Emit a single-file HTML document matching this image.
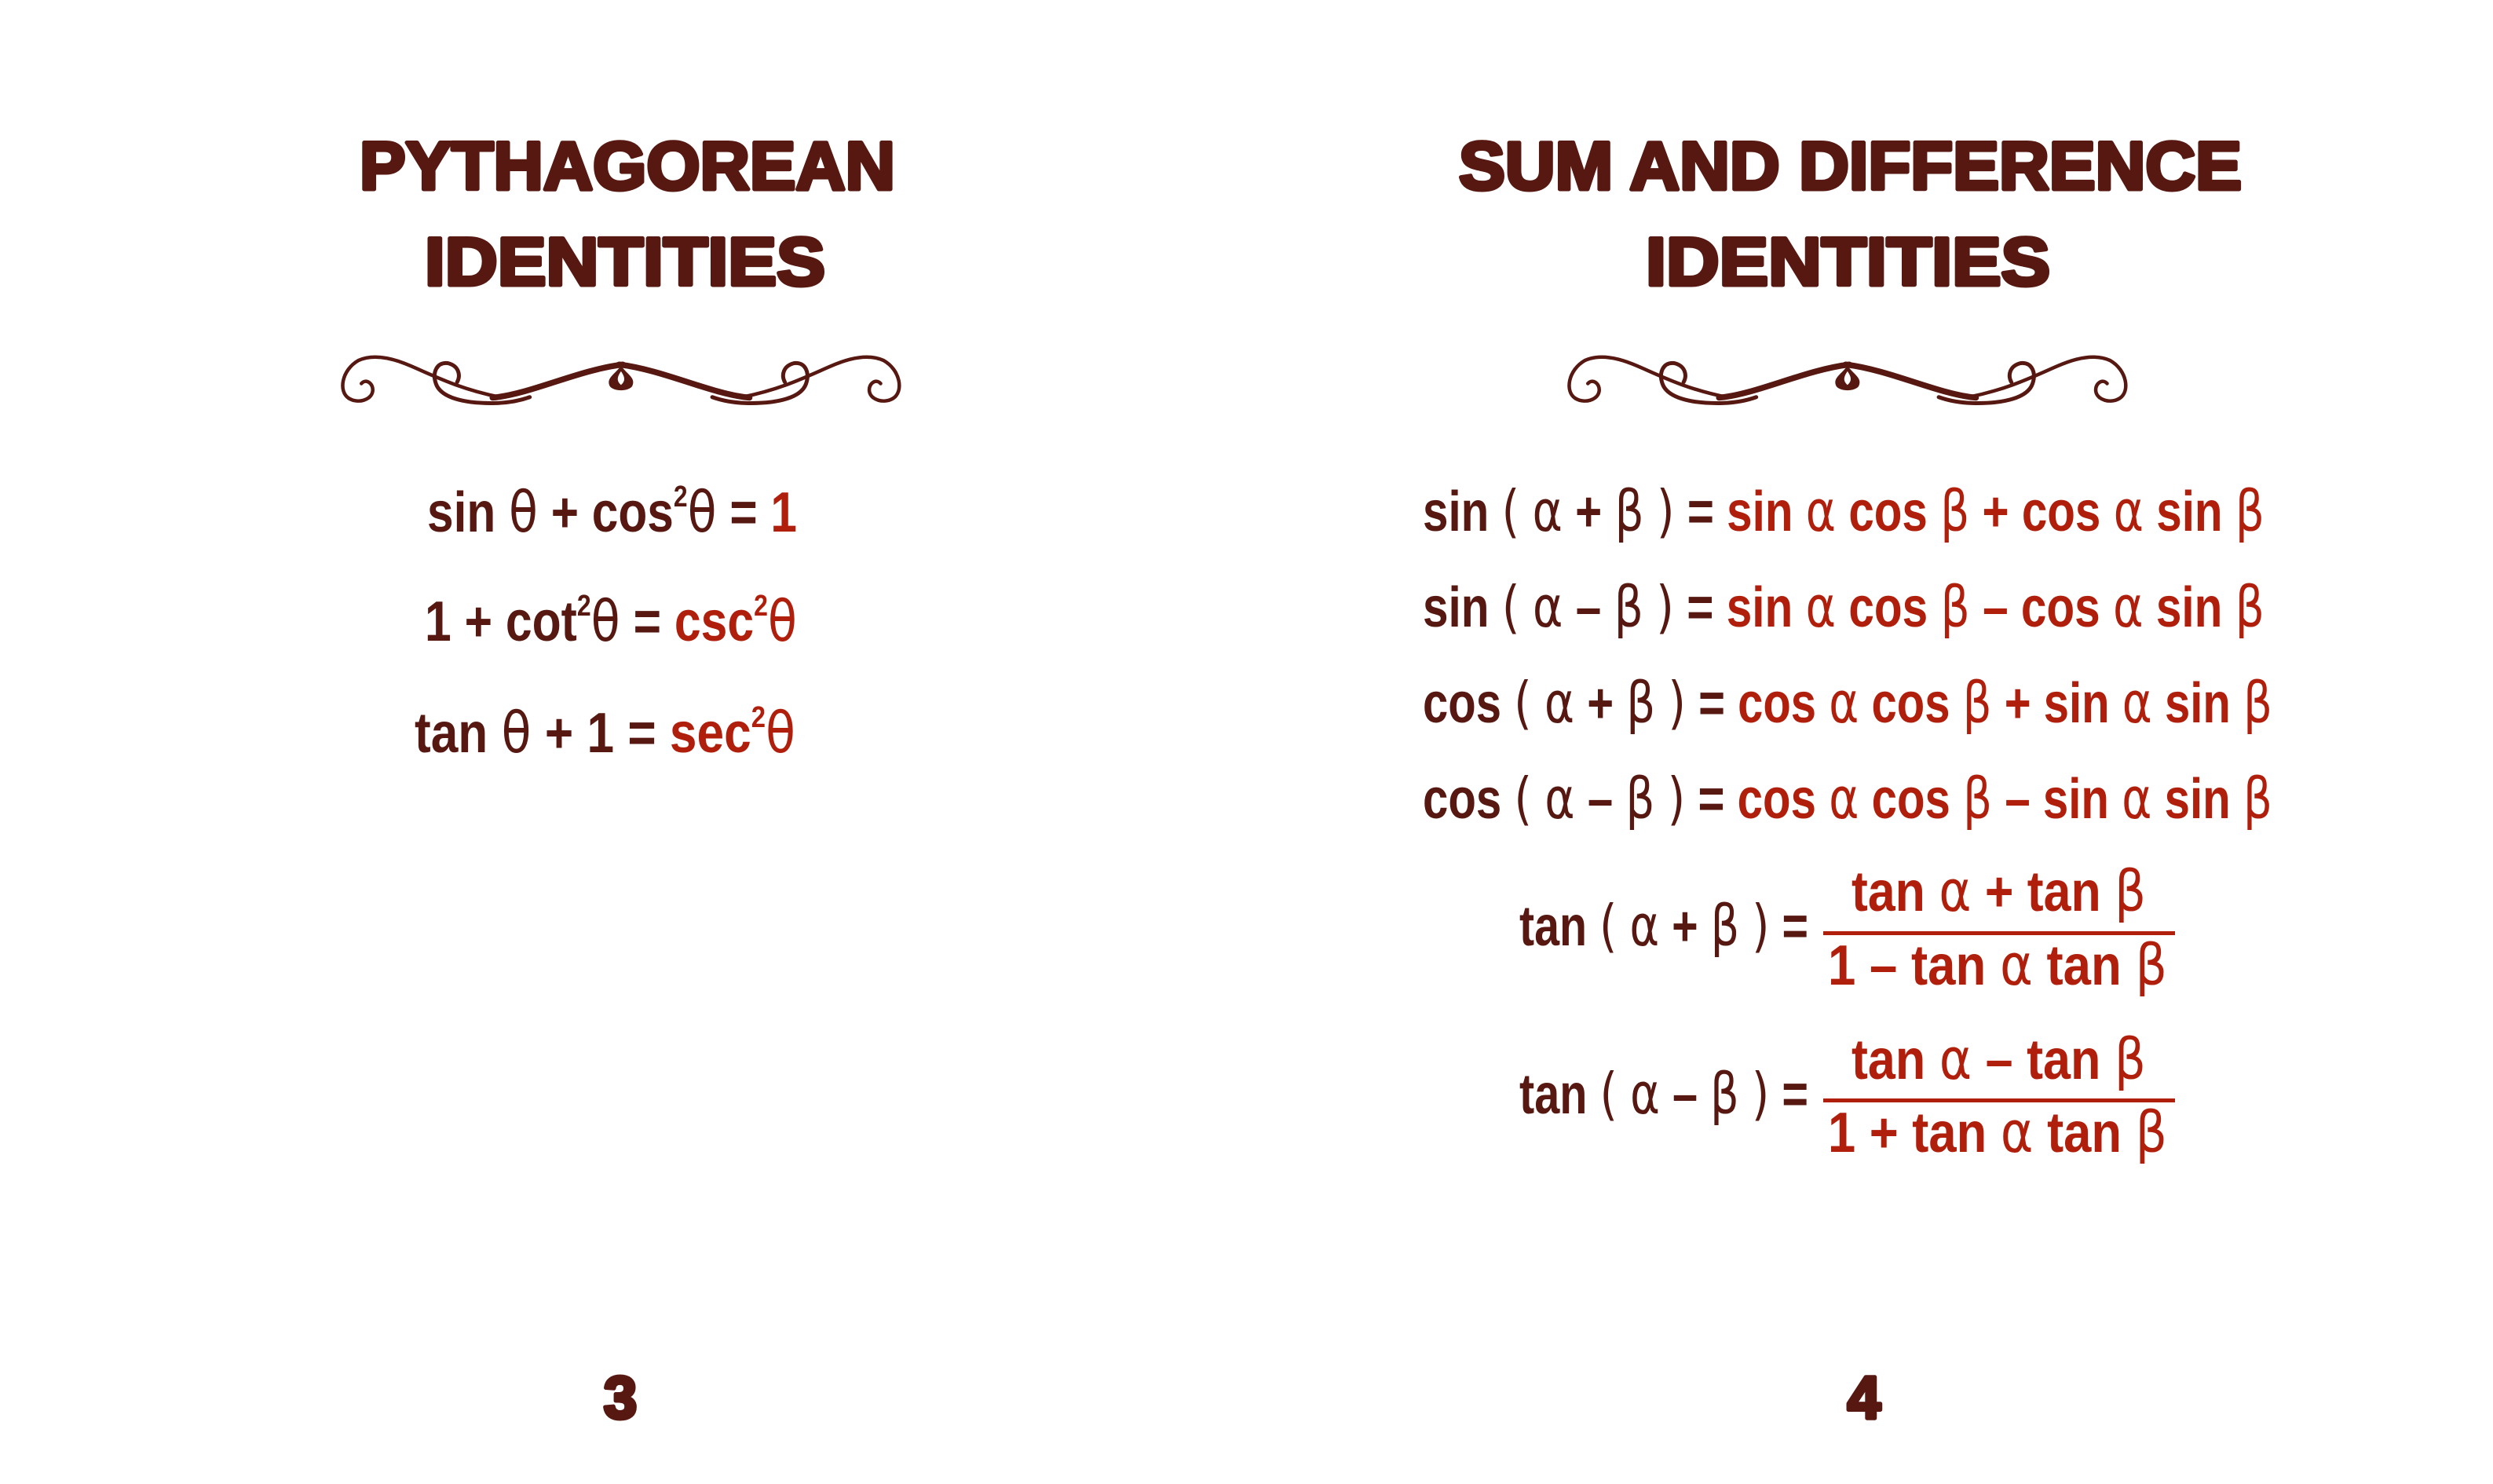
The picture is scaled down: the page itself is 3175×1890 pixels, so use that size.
<!DOCTYPE html>
<html><head><meta charset="utf-8"><style>
html,body{margin:0;padding:0;background:#fff;width:3175px;height:1890px;overflow:hidden}
svg{display:block}
.t{font-family:"Liberation Sans",sans-serif;font-weight:bold;fill:#561810;stroke:#561810;stroke-width:5;stroke-linejoin:round}
.e{font-family:"Liberation Sans Narrow","Liberation Sans",sans-serif;font-weight:bold;font-size:72px;fill:#561810}
.r{fill:#b01f0c}
.g{font-family:"DejaVu Sans","Liberation Sans",sans-serif;font-weight:normal}
.s{font-size:38px}
.o{fill:none;stroke:#561810;stroke-linecap:round}
</style></head><body>
<svg width="3175" height="1890" viewBox="0 0 3175 1890" xmlns="http://www.w3.org/2000/svg">
<defs>
<g id="half">
<path class="o" vector-effect="non-scaling-stroke" stroke-width="4.5" d="M68 140 C80 120 102 140 98 170 C94 200 60 215 35 195 C5 170 15 90 60 55 C100 30 150 45 200 75 C260 110 330 160 440 190"/>
<path class="o" vector-effect="non-scaling-stroke" stroke-width="7.5" d="M420 192 C520 180 650 90 770 70"/>
<path class="o" vector-effect="non-scaling-stroke" stroke-width="5" d="M325 135 C335 110 330 75 300 65 C270 60 258 100 268 140 C280 190 340 215 430 212 C470 210 500 200 520 190"/>
</g>
<g id="orn">
<use href="#half"/>
<use href="#half" transform="translate(1530,0) scale(-1,1)"/>
<path fill="#561810" d="M765 75 C745 110 725 120 735 150 C745 170 785 170 795 150 C805 120 785 110 765 75Z"/>
<path fill="#fff" d="M765 95 C755 115 752 130 765 145 C778 130 775 115 765 95Z"/>
</g>
</defs>

<text class="t" x="458" y="241" font-size="86" textLength="682" lengthAdjust="spacingAndGlyphs">PYTHAGOREAN</text>
<text class="t" x="541" y="363" font-size="86" textLength="510" lengthAdjust="spacingAndGlyphs">IDENTITIES</text>
<text class="t" x="1858" y="241" font-size="86" textLength="997" lengthAdjust="spacingAndGlyphs">SUM AND DIFFERENCE</text>
<text class="t" x="2096" y="363" font-size="86" textLength="515" lengthAdjust="spacingAndGlyphs">IDENTITIES</text>

<svg x="428" y="440" width="740" height="90" viewBox="0 0 1560 260" preserveAspectRatio="none"><use href="#orn"/></svg>
<svg x="1990" y="440" width="740" height="90" viewBox="0 0 1560 260" preserveAspectRatio="none"><use href="#orn"/></svg>

<text class="e" x="544" y="677" textLength="471" lengthAdjust="spacingAndGlyphs">sin   <tspan class="g">θ</tspan> + cos<tspan class="s" dy="-32">2</tspan><tspan class="g" dy="32">θ</tspan> = <tspan class="r">1</tspan></text>
<text class="e" x="541" y="816" textLength="474" lengthAdjust="spacingAndGlyphs">1 + cot<tspan class="s" dy="-32">2</tspan><tspan class="g" dy="32">θ</tspan> = <tspan class="r">csc</tspan><tspan class="s r" dy="-32">2</tspan><tspan class="g r" dy="32">θ</tspan></text>
<text class="e" x="528" y="958" textLength="485" lengthAdjust="spacingAndGlyphs">tan   <tspan class="g">θ</tspan> + 1 = <tspan class="r">sec</tspan><tspan class="s r" dy="-32">2</tspan><tspan class="g r" dy="32">θ</tspan></text>

<text class="e" x="1812" y="676" textLength="1072" lengthAdjust="spacingAndGlyphs">sin <tspan class="g">(</tspan> <tspan class="g">α</tspan> + <tspan class="g">β</tspan> <tspan class="g">)</tspan> = <tspan class="r">sin <tspan class="g">α</tspan>  cos <tspan class="g">β</tspan>  +  cos <tspan class="g">α</tspan>  sin <tspan class="g">β</tspan></tspan></text>
<text class="e" x="1812" y="798" textLength="1072" lengthAdjust="spacingAndGlyphs">sin <tspan class="g">(</tspan> <tspan class="g">α</tspan> – <tspan class="g">β</tspan> <tspan class="g">)</tspan> = <tspan class="r">sin <tspan class="g">α</tspan>  cos <tspan class="g">β</tspan>  –  cos <tspan class="g">α</tspan>  sin <tspan class="g">β</tspan></tspan></text>
<text class="e" x="1812" y="920" textLength="1082" lengthAdjust="spacingAndGlyphs">cos <tspan class="g">(</tspan> <tspan class="g">α</tspan> + <tspan class="g">β</tspan> <tspan class="g">)</tspan> = <tspan class="r">cos <tspan class="g">α</tspan>  cos <tspan class="g">β</tspan>  +  sin <tspan class="g">α</tspan>  sin <tspan class="g">β</tspan></tspan></text>
<text class="e" x="1812" y="1042" textLength="1082" lengthAdjust="spacingAndGlyphs">cos <tspan class="g">(</tspan> <tspan class="g">α</tspan> – <tspan class="g">β</tspan> <tspan class="g">)</tspan> = <tspan class="r">cos <tspan class="g">α</tspan>  cos <tspan class="g">β</tspan>  –  sin <tspan class="g">α</tspan>  sin <tspan class="g">β</tspan></tspan></text>

<text class="e" x="1935" y="1204" textLength="368" lengthAdjust="spacingAndGlyphs">tan <tspan class="g">(</tspan> <tspan class="g">α</tspan> + <tspan class="g">β</tspan> <tspan class="g">)</tspan> =</text>
<text class="e r" x="2358" y="1160" textLength="375" lengthAdjust="spacingAndGlyphs">tan <tspan class="g">α</tspan> + tan <tspan class="g">β</tspan></text>
<rect x="2322" y="1186" width="448" height="5" fill="#b01f0c"/>
<text class="e r" x="2328" y="1254" textLength="432" lengthAdjust="spacingAndGlyphs">1 – tan <tspan class="g">α</tspan>  tan <tspan class="g">β</tspan></text>

<text class="e" x="1935" y="1418" textLength="368" lengthAdjust="spacingAndGlyphs">tan <tspan class="g">(</tspan> <tspan class="g">α</tspan> – <tspan class="g">β</tspan> <tspan class="g">)</tspan> =</text>
<text class="e r" x="2358" y="1374" textLength="375" lengthAdjust="spacingAndGlyphs">tan <tspan class="g">α</tspan> – tan <tspan class="g">β</tspan></text>
<rect x="2322" y="1399" width="448" height="5" fill="#b01f0c"/>
<text class="e r" x="2328" y="1467" textLength="432" lengthAdjust="spacingAndGlyphs">1 + tan <tspan class="g">α</tspan>  tan <tspan class="g">β</tspan></text>

<text class="t" x="790" y="1806" font-size="76" text-anchor="middle" stroke-width="3">3</text>
<text class="t" x="2374" y="1806" font-size="76" text-anchor="middle" stroke-width="3">4</text>
</svg>
</body></html>
